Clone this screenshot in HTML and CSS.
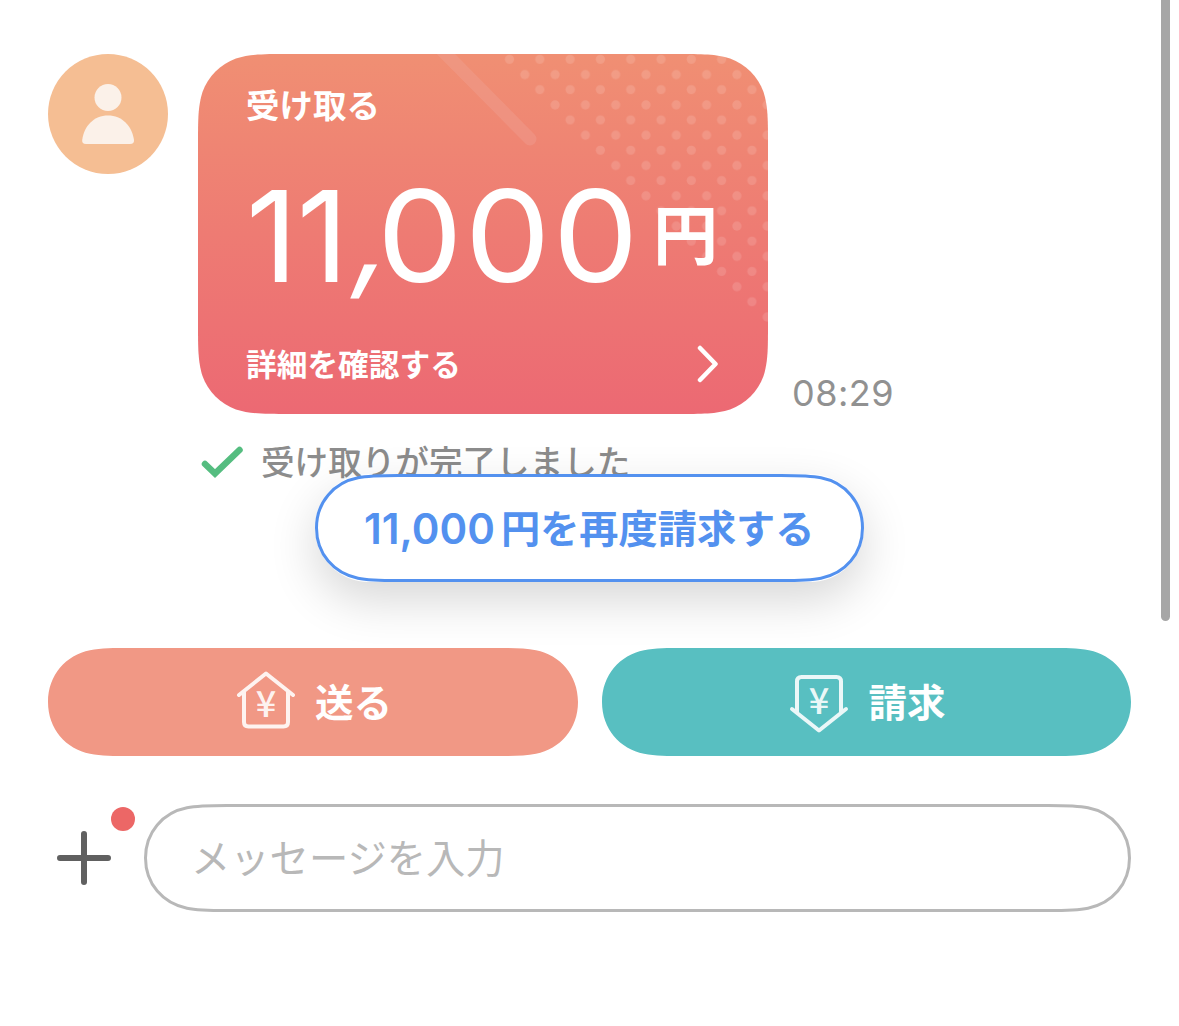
FILE: index.html
```html
<!DOCTYPE html>
<html lang="ja">
<head>
    <meta charset="UTF-8">
    <meta name="viewport" content="width=device-width, initial-scale=1.0">
    <title>メッセージ</title>
    <link rel="stylesheet" href="styles.css">
</head>
<body>
    <main class="chat">
        <div class="message">
            <svg class="avatar" viewBox="0 0 120 120">
                <circle cx="60" cy="60" r="60" fill="#f5be93"/>
                <circle cx="60" cy="43.5" r="13.5" fill="#fbf1e9"/>
                <path d="M38 90C35 90 34 88.500 34.200 86C36 72 46 61.500 60 61.500S84 72 86 86C86.200 88.500 85 90 82 90Z" fill="#fbf1e9"/>
            </svg>

            <div class="card">
                <svg class="shape" viewBox="0 0 570 360">
                    <defs>
                        <linearGradient id="cardColor" x1="0" y1="0" x2="0" y2="1">
                            <stop offset="0" stop-color="#f08f73"/>
                            <stop offset="0.5" stop-color="#ee7b73"/>
                            <stop offset="1" stop-color="#ec6973"/>
                        </linearGradient>
                        <pattern id="dots" x="296.500" y="-9.700" width="30.300" height="30.300" patternUnits="userSpaceOnUse">
                            <circle cx="15" cy="15" r="4.600" fill="#fff"/>
                            <circle cx="0" cy="0" r="4.600" fill="#fff"/>
                            <circle cx="30.300" cy="0" r="4.600" fill="#fff"/>
                            <circle cx="0" cy="30.300" r="4.600" fill="#fff"/>
                            <circle cx="30.300" cy="30.300" r="4.600" fill="#fff"/>
                        </pattern>
                        <clipPath id="cardClip">
                            <path d="M91.700 0H478.300C504.700 0 517.900 0 532.100 4.500C547.600 10.100 559.900 22.400 565.500 37.900C570 52.100 570 65.300 570 91.700V268.300C570 294.700 570 307.900 565.500 322.100C559.900 337.600 547.600 349.900 532.100 355.500C517.900 360 504.700 360 478.300 360H91.700C65.300 360 52.100 360 37.900 355.500C22.400 349.900 10.100 337.600 4.500 322.100C0 307.900 0 294.700 0 268.300V91.700C0 65.300 0 52.100 4.500 37.900C10.100 22.400 22.400 10.100 37.900 4.500C52.100 0 65.300 0 91.700 0Z"/>
                        </clipPath>
                    </defs>
                    <g clip-path="url(#cardClip)">
                        <rect width="570" height="360" fill="url(#cardColor)"/>
                        <path d="M296 0H570V274Z" fill="url(#dots)" opacity="0.13"/>
                        <path d="M236 -12L332 85" stroke="#f0a8a0" stroke-opacity="0.3" stroke-width="13" stroke-linecap="round"/>
                    </g>
                </svg>
                <div class="card-title">受け取る</div>
                <div class="amount"><span class="amount-number">11<span class="comma">,</span><span class="zeros">000</span></span><span class="yen">円</span></div>
                <div class="card-link">
                    <span>詳細を確認する</span>
                    <svg class="chevron" viewBox="0 0 22 38"><path d="M3 3L18.500 19L3 35" fill="none" stroke="#fff" stroke-width="4.500" stroke-linecap="round" stroke-linejoin="round"/></svg>
                </div>
            </div>
            <time class="time">08:29</time>
        </div>

        <div class="status">
            <svg class="check" viewBox="0 0 42 32"><path d="M4 18L14 27.500L38.500 4" fill="none" stroke="#55bd80" stroke-width="6.500" stroke-linecap="round"/></svg>
            <span>受け取りが完了しました</span>
        </div>

        <button class="request-again">
            <svg class="shape" viewBox="0 0 549 108"><path d="M83 1.500H466C482 1.500 495 1.500 506 3.800C530 8.500 547.500 28 547.500 54S530 99.500 506 104.200C495 106.500 482 106.500 466 106.500H83C67 106.500 54 106.500 43 104.200C19 99.500 1.500 80 1.500 54S19 8.500 43 3.800C54 1.500 67 1.500 83 1.500Z" fill="#fff" stroke="#5391ef" stroke-width="3"/></svg>
            <span class="again-number">11,000</span><span class="again-text">円を再度請求する</span>
        </button>
    </main>

    <div class="actions">
        <button class="action">
            <svg class="shape" viewBox="0 0 530 108"><path d="M82 0H448C464 0 477 0 488 2.300C512 7 530 27 530 54S512 101 488 105.700C477 108 464 108 448 108H82C66 108 53 108 42 105.700C18 101 0 81 0 54S18 7 42 2.300C53 0 66 0 82 0Z" fill="#f19885"/></svg>
            <svg class="action-icon send-icon" viewBox="0 0 58 58">
                <path d="M2 24L29 2.500L56 24M7 20.500V51Q7 55.500 11.500 55.500H46.500Q51 55.500 51 51V20.500"/>
                <text x="29" y="46">¥</text>
            </svg>
            <span>送る</span>
        </button>
        <button class="action">
            <svg class="shape" viewBox="0 0 529 108"><path d="M82 0H447C463 0 476 0 487 2.300C511 7 529 27 529 54S511 101 487 105.700C476 108 463 108 447 108H82C66 108 53 108 42 105.700C18 101 0 81 0 54S18 7 42 2.300C53 0 66 0 82 0Z" fill="#58bfc1"/></svg>
            <svg class="action-icon request-icon" viewBox="0 0 58 58">
                <path d="M2 34L29 55.500L56 34M7 37.500V6.500Q7 2 11.500 2H46.500Q51 2 51 6.500V37.500"/>
                <text x="29" y="39">¥</text>
            </svg>
            <span>請求</span>
        </button>
    </div>

    <div class="composer">
        <div class="add">
            <svg class="plus" viewBox="0 0 54 54"><path d="M27 3V51M3 27H51" stroke="#606060" stroke-width="6" stroke-linecap="round"/></svg>
            <i class="badge"></i>
        </div>
        <div class="field">
            <svg class="shape" viewBox="0 0 987 108"><path d="M83 1.500H904C920 1.500 933 1.500 944 3.800C968 8.500 985.500 28 985.500 54S968 99.500 944 104.200C933 106.500 920 106.500 904 106.500H83C67 106.500 54 106.500 43 104.200C19 99.500 1.500 80 1.500 54S19 8.500 43 3.800C54 1.500 67 1.500 83 1.500Z" fill="#fff" stroke="#b8b8b8" stroke-width="3"/></svg>
            <span>メッセージを入力</span>
        </div>
    </div>

    <div class="scrollbar"></div>
</body>
</html>
```
FILE: styles.css
```css
* {
    box-sizing: border-box;
}

body {
    margin: 0;
    height: 1026px;
    overflow: hidden;
    background-color: #fff;
    font-family: "Noto Sans CJK JP", sans-serif;
    font-weight: 500;
}

button {
    padding: 0;
    border: none;
    background: none;
    font: inherit;
}

/* rounded outlines drawn behind the content */
.shape {
    position: absolute;
    top: 0;
    left: 0;
    width: 100%;
    height: 100%;
    z-index: -1;
    overflow: visible;
}

.chat {
    position: relative;
    height: 648px;
    padding: 54px 48px 0;
}

.message {
    display: flex;
    height: 360px;
}

.avatar {
    width: 120px;
    height: 120px;
    margin-right: 30px;
}

.card {
    position: relative;
    z-index: 0;
    width: 570px;
    height: 360px;
    padding: 31px 49px 0 48px;
    color: #fff;
}

.card-title {
    height: 38px;
    font-size: 33.5px;
    line-height: 38px;
    font-weight: 700;
}

.amount {
    display: flex;
    height: 224px;
    line-height: 226px;
    white-space: nowrap;
}

.amount-number {
    display: flex;
    width: 407px;
    font-family: Inter, sans-serif;
    font-size: 127px;
    font-weight: 400;
    letter-spacing: -1px;
}

.comma {
    width: 30px;
    transform: translate(12px, -4px) skewX(-14deg) scaleY(0.97);
}

.zeros {
    letter-spacing: 2px;
    transform: scaleX(1.07);
    transform-origin: left;
}

.yen {
    font-size: 65px;
    font-weight: 700;
    line-height: 217px;
}

.card-link {
    display: flex;
    align-items: center;
    justify-content: space-between;
    height: 34px;
    font-size: 30.7px;
    line-height: 32px;
    font-weight: 700;
}

.card-link span {
    padding-bottom: 3px;
}

.chevron {
    width: 22px;
    height: 38px;
}

.time {
    align-self: flex-end;
    margin-left: 24px;
    font-family: Inter, sans-serif;
    font-size: 36px;
    font-weight: 400;
    line-height: 42px;
    letter-spacing: 0.5px;
    color: #919191;
}

.status {
    display: flex;
    align-items: center;
    height: 48px;
    margin: 24px 0 0 153px;
    font-size: 33.6px;
    color: #8c8c8c;
}

.status span {
    padding-bottom: 4px;
}

.check {
    width: 42px;
    height: 32px;
    margin-right: 18px;
}

.request-again {
    position: absolute;
    top: 474px;
    left: 315px;
    z-index: 1;
    display: flex;
    align-items: center;
    width: 549px;
    height: 108px;
    padding-left: 49px;
    border-radius: 54px;
    box-shadow: 0 18px 48px rgba(0, 0, 0, 0.16);
    color: #5391ef;
    white-space: nowrap;
}

.again-number {
    width: 137px;
    font-family: Inter, sans-serif;
    font-size: 42px;
    font-weight: 600;
    text-align: left;
}

.again-text {
    padding-bottom: 4px;
    font-size: 39.2px;
    font-weight: 700;
}

.actions {
    display: grid;
    grid-template-columns: 530px 529px;
    gap: 24px;
    padding-left: 48px;
}

.action {
    position: relative;
    z-index: 0;
    display: flex;
    align-items: center;
    justify-content: center;
    gap: 20px;
    height: 108px;
    padding-left: 3px;
    color: #fff;
    font-size: 38.5px;
    font-weight: 700;
}

.action span {
    padding-bottom: 4px;
}

.action-icon {
    width: 58px;
    height: 58px;
    overflow: visible;
    fill: none;
    stroke: #fff;
    stroke-opacity: 0.88;
    stroke-width: 4;
    stroke-linecap: round;
    stroke-linejoin: round;
}

.action-icon text {
    fill: #fff;
    fill-opacity: 0.9;
    stroke: none;
    font-size: 36px;
    font-weight: 500;
    text-anchor: middle;
}

.send-icon {
    margin-top: -4px;
}

.request-icon {
    margin-top: 3px;
}

.composer {
    display: flex;
    margin-top: 48px;
}

.add {
    position: relative;
    width: 144px;
    height: 108px;
    padding: 27px 0 0 57px;
}

.plus {
    display: block;
    width: 54px;
    height: 54px;
}

.badge {
    position: absolute;
    top: 3px;
    left: 111px;
    width: 24px;
    height: 24px;
    border-radius: 50%;
    background-color: #ec6766;
}

.field {
    position: relative;
    z-index: 0;
    width: 987px;
    height: 108px;
    padding-left: 47px;
    color: #b8b8b8;
    font-size: 39.3px;
    font-weight: 400;
    line-height: 103px;
}

.scrollbar {
    position: absolute;
    top: -20px;
    left: 1161px;
    width: 9px;
    height: 641px;
    border-radius: 5px;
    background-color: #a6a6a6;
}
```
